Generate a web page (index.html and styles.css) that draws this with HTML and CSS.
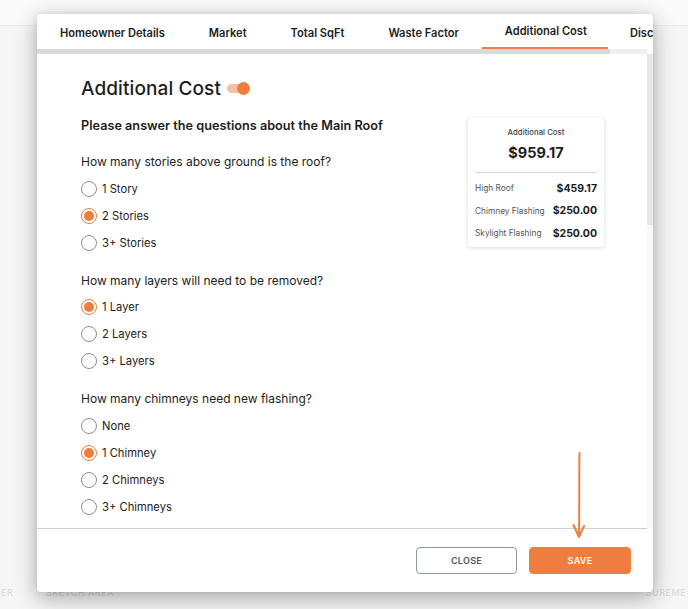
FILE: index.html
```html
<!DOCTYPE html>
<html>
<head>
<meta charset="utf-8">
<link rel="stylesheet" href="styles.css">
</head>
<body>
<div class="page">
  <div class="page-header"></div>
  <div class="page-body"></div>
  <div class="page-footer">
    <span class="bg-left">ER</span>
    <span class="bg-mid">SKETCH AREA</span>
    <span class="bg-right">SUREME</span>
  </div>
</div>

<div class="modal">
  <nav class="tabs">
    <div class="tab">Homeowner Details</div>
    <div class="tab">Market</div>
    <div class="tab">Total SqFt</div>
    <div class="tab">Waste Factor</div>
    <div class="tab active">Additional Cost</div>
    <div class="tab">Discount</div>
  </nav>
  <div class="hscroll"><div class="hthumb"></div></div>
  <div class="body">
    <div class="content">
      <div class="main">
        <h1 class="title">Additional Cost <span class="toggle"><span class="track"></span><span class="knob"></span></span></h1>
        <p class="intro">Please answer the questions about the Main Roof</p>

        <div class="question">
          <p class="q">How many stories above ground is the roof?</p>
          <label class="opt"><span class="radio"></span>1 Story</label>
          <label class="opt"><span class="radio on"></span>2 Stories</label>
          <label class="opt"><span class="radio"></span>3+ Stories</label>
        </div>

        <div class="question">
          <p class="q">How many layers will need to be removed?</p>
          <label class="opt"><span class="radio on"></span>1 Layer</label>
          <label class="opt"><span class="radio"></span>2 Layers</label>
          <label class="opt"><span class="radio"></span>3+ Layers</label>
        </div>

        <div class="question">
          <p class="q">How many chimneys need new flashing?</p>
          <label class="opt"><span class="radio"></span>None</label>
          <label class="opt"><span class="radio on"></span>1 Chimney</label>
          <label class="opt"><span class="radio"></span>2 Chimneys</label>
          <label class="opt"><span class="radio"></span>3+ Chimneys</label>
        </div>
      </div>

      <aside class="card">
        <div class="card-label">Additional Cost</div>
        <div class="card-total">$959.17</div>
        <div class="card-rows">
          <div class="row"><span>High Roof</span><b>$459.17</b></div>
          <div class="row"><span>Chimney Flashing</span><b>$250.00</b></div>
          <div class="row"><span>Skylight Flashing</span><b>$250.00</b></div>
        </div>
      </aside>
    </div>
    <div class="vscroll"><div class="vthumb"></div></div>
  </div>
  <footer class="footer">
    <button class="btn close">CLOSE</button>
    <button class="btn save">SAVE</button>
  </footer>
  <svg class="arrow" width="20" height="92" viewBox="0 0 20 92">
    <path d="M10.5 2 C10 30 10.5 60 10 85" fill="none" stroke="#ef7d3f" stroke-width="2" stroke-linecap="round"/>
    <path d="M4.5 74 L10 86 L15 75" fill="none" stroke="#ef7d3f" stroke-width="2" stroke-linecap="round" stroke-linejoin="round"/>
  </svg>
</div>
</body>
</html>
```
FILE: styles.css
```css
* { box-sizing: border-box; }
html, body { margin: 0; padding: 0; }
body {
  width: 688px;
  height: 609px;
  overflow: hidden;
  background: #f7f7f7;
  font-family: Inter, "Noto Sans", sans-serif;
  color: #1e1e1e;
  position: relative;
}
.page { display: flex; flex-direction: column; height: 609px; }
.page-header { height: 26px; border-bottom: 1px solid #ececec; background: #fafafa; }
.page-body { flex: 1; background: #f6f6f6; }
.page-footer {
  height: 28px;
  display: flex;
  align-items: flex-start;
  padding-top: 6px;
  padding-left: 1px;
  padding-right: 2px;
  font-size: 9px;
  color: #d6d6d6;
  letter-spacing: 0.5px;
  background: #f6f6f6;
}
.bg-left { width: 45px; }
.bg-mid { flex: 1; }

.modal {
  position: absolute;
  left: 37px;
  top: 14px;
  width: 616px;
  height: 578px;
  background: #fff;
  border-radius: 4px;
  box-shadow: 0 6px 22px rgba(0,0,0,0.32), 0 0 6px rgba(0,0,0,0.08);
  display: flex;
  flex-direction: column;
  overflow: hidden;
}
.tabs {
  display: flex;
  height: 35px;
  padding-left: 1px;
  white-space: nowrap;
  overflow: hidden;
}
.tab {
  padding: 4px 22px 0;
  font-size: 11.1px;
  font-weight: 600;
  color: #1d1d1d;
  display: flex;
  align-items: center;
  border-bottom: 2px solid transparent;
}
.tab.active { border-bottom-color: #e8814c; padding: 0 21px 0 23px; margin-left: 1px; }
.hscroll { height: 5px; background: #efefef; margin-right: 6px; }
.hthumb { width: 573px; height: 5px; background: #d9d9d9; }
.body { flex: 1; display: flex; min-height: 0; }
.content {
  flex: 1;
  display: flex;
  justify-content: space-between;
  padding: 22px 43px 0 44px;
  overflow: hidden;
}
.vscroll { width: 6px; background: #fafafa; }
.vthumb { height: 171px; background: #e6e6e6; }
.title {
  margin: 0;
  font-size: 19px;
  font-weight: 500;
  letter-spacing: 0.1px;
  display: flex;
  align-items: center;
  height: 24px;
}
.toggle { position: relative; width: 23px; height: 13px; margin-left: 6px; display: inline-block; }
.track { position: absolute; left: 0; top: 2px; width: 18px; height: 9px; border-radius: 5px; background: #f6c1a2; }
.knob { position: absolute; right: 0; top: 0; width: 13px; height: 13px; border-radius: 50%; background: #ef7d3f; }
.intro { margin: 18px 0 0; font-size: 12.7px; font-weight: 600; line-height: 16px; }
.question { margin-top: 20px; display: flex; flex-direction: column; }
.question + .question { margin-top: 16.5px; }
.q { margin: 0 0 5px; font-size: 12px; font-weight: 400; color: #222; line-height: 16px; }
.opt {
  display: flex;
  align-items: center;
  height: 27px;
  font-size: 11.2px;
  color: #222;
}
.radio {
  width: 16px;
  height: 16px;
  border-radius: 50%;
  border: 1.5px solid #8e8e8e;
  margin-right: 5px;
  position: relative;
}
.radio.on { border-color: #ef7d3f; }
.radio.on::after {
  content: "";
  position: absolute;
  left: 2px; top: 2px; right: 2px; bottom: 2px;
  border-radius: 50%;
  background: #ef7d3f;
}
.card {
  width: 136px;
  height: 129px;
  margin-top: 42px;
  border-radius: 3px;
  box-shadow: 0 1px 4px rgba(0,0,0,0.16);
  padding: 9px 7px 0;
  flex-shrink: 0;
}
.card-label { text-align: center; font-size: 7.8px; font-weight: 500; color: #444; }
.card-total { text-align: center; font-size: 14.5px; font-weight: 700; margin-top: 7px; padding-bottom: 11px; border-bottom: 1px solid #d8d8d8; }
.card-rows { display: flex; flex-direction: column; padding-top: 4px; }
.row { display: flex; justify-content: space-between; align-items: center; height: 22.5px; }
.row span { font-size: 8.3px; color: #555; }
.row b { font-size: 10.5px; font-weight: 700; color: #1a1a1a; }
.footer {
  height: 64px;
  flex-shrink: 0;
  border-top: 1px solid #cfcfcf;
  margin-right: 6px;
  display: flex;
  justify-content: flex-end;
  align-items: center;
  gap: 12px;
  padding-right: 16px;
}
.btn {
  width: 102px;
  height: 27px;
  border-radius: 4px;
  font-family: Inter, sans-serif;
  font-size: 9px;
  font-weight: 600;
  letter-spacing: 0.3px;
}
.close { background: #fff; border: 1px solid #8f979e; color: #4c5861; width: 101px; }
.save { background: #ef7d3f; border: 1px solid #ef7d3f; color: #fff; }
.arrow { position: absolute; left: 532px; top: 437px; }
```
